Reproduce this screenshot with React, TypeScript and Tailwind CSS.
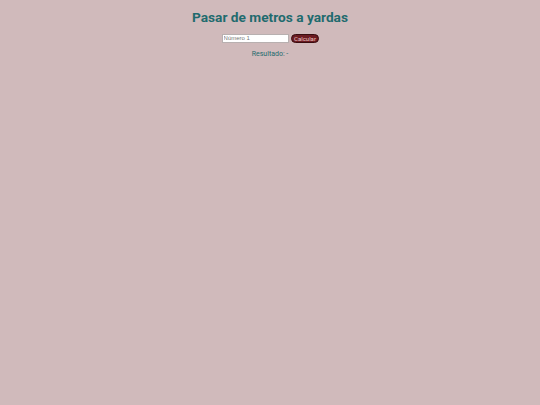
export default function App() {
  return (
    <div
      className="min-h-[405px] bg-[#d0babb] text-center text-[#1f6b6e]"
      style={{ fontFamily: 'Roboto, sans-serif' }}
    >
      <h1 className="pt-[8px] text-[13.7px] font-bold leading-[18px]">Pasar de metros a yardas</h1>
      <div className="mt-[8px] flex items-center justify-center gap-[2px] pl-[1px]">
        <input
          type="text"
          placeholder="Número 1"
          className="h-[9px] w-[67px] border border-[#b8b0b0] bg-white px-[1px] text-[6px] text-gray-700 outline-none placeholder:text-[#777]"
          style={{ fontFamily: '"Liberation Sans", sans-serif' }}
        />
        <button className="h-[9px] rounded-full border border-[#3a0d10] bg-[#6b1b21] px-[2.5px] text-[6px] leading-[7px] text-[#f0c8c8]">
          Calcular
        </button>
      </div>
      <p className="mt-[6px] text-[7px] leading-[10px]">Resultado: -</p>
    </div>
  );
}
